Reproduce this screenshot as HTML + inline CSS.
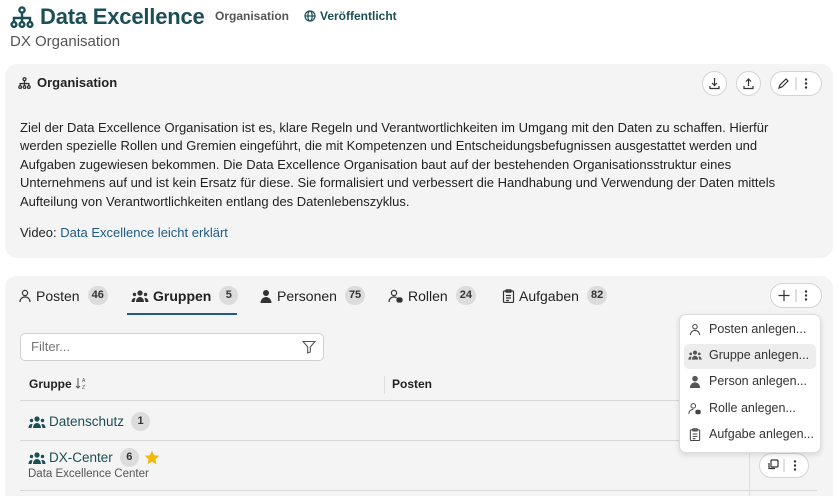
<!DOCTYPE html>
<html style="width:839px;height:496px;overflow:hidden"><head><meta charset="utf-8"><style>
*{box-sizing:border-box;margin:0;padding:0}
body{width:839px;height:496px;overflow:hidden;background:#fff;font-family:"Liberation Sans",sans-serif;color:#222;position:relative}
.a{position:absolute;white-space:nowrap}
.card{position:absolute;background:#f4f4f4;border-radius:12px}
.teal{color:#1b4f55}
.btn{position:absolute;width:25px;height:25px;border:1px solid #d4d4d4;border-radius:13px;background:#fff}
.pill{position:absolute;height:25px;border:1px solid #d4d4d4;border-radius:13px;background:#fff}
.badge{display:inline-block;background:#dcdcdc;border-radius:10px;font-size:11px;font-weight:bold;color:#333;padding:0 4px;height:19px;line-height:19px;vertical-align:middle;min-width:19px;text-align:center;margin-left:4px}
.tab{position:absolute;top:286px;font-size:14px;color:#222;display:flex;align-items:center;gap:4px}
.mi{position:absolute;left:688px;font-size:12.5px;color:#333;display:flex;align-items:center;gap:7px}
</style></head><body>
<div class="a teal" style="left:10px;top:4px;font-size:22px;font-weight:bold;display:flex;align-items:center;gap:6px">
<svg width="24" height="22" viewBox="0 0 24 22" fill="none" stroke="#1b4f55" stroke-width="2.4"><circle cx="12" cy="4" r="2.6"/><path d="M12 7v5M4 16v-4h16v4M12 12v4"/><circle cx="4" cy="18.5" r="2.4"/><circle cx="12" cy="18.5" r="2.4"/><circle cx="20" cy="18.5" r="2.4"/></svg>
<span style="letter-spacing:-0.2px">Data Excellence</span></div>
<div class="a" style="left:215px;top:9px;font-size:12px;font-weight:bold;color:#555">Organisation</div>
<div class="a teal" style="left:304px;top:9px;font-size:12px;font-weight:bold;display:flex;align-items:center;gap:4px"><svg width="12" height="12" viewBox="0 0 12 12" fill="none" stroke="#1b4f55" stroke-width="1.2"><circle cx="6" cy="6" r="5"/><ellipse cx="6" cy="6" rx="2.2" ry="5"/><path d="M1 6h10"/></svg>Veröffentlicht</div>
<div class="a" style="left:10px;top:33px;font-size:15px;color:#555">DX Organisation</div>

<div class="card" style="left:5px;top:64px;width:828px;height:194px"></div>
<div class="a" style="left:18px;top:75px;font-size:13px;font-weight:bold;display:flex;align-items:center;gap:6px"><svg width="13" height="12" viewBox="0 0 24 22" fill="none" stroke="#333" stroke-width="2.4"><circle cx="12" cy="4" r="2.6"/><path d="M12 7v5M4 16v-4h16v4M12 12v4"/><circle cx="4" cy="18.5" r="2.4"/><circle cx="12" cy="18.5" r="2.4"/><circle cx="20" cy="18.5" r="2.4"/></svg>Organisation</div>
<div class="btn" style="left:702px;top:71px"><svg width="23" height="23" viewBox="0 0 23 23" fill="none" stroke="#333" stroke-width="1.2"><path d="M11.5 6v7M9 11l2.5 2.5L14 11M7 14v2.5h9V14"/></svg></div>
<div class="btn" style="left:736px;top:71px"><svg width="23" height="23" viewBox="0 0 23 23" fill="none" stroke="#333" stroke-width="1.2"><path d="M11.5 14V7M9 9.5l2.5-2.5L14 9.5M7 14v2.5h9V14"/></svg></div>
<div class="pill" style="left:770px;top:71px;width:52px"><svg width="50" height="23" viewBox="0 0 50 23" fill="none" stroke="#333" stroke-width="1.2"><path d="M8 16l1-3 6-6 2 2-6 6z"/><path d="M25 5v13" stroke="#ccc"/><circle cx="35" cy="7.5" r=".6" fill="#333"/><circle cx="35" cy="11.5" r=".6" fill="#333"/><circle cx="35" cy="15.5" r=".6" fill="#333"/></svg></div>
<div class="a" style="left:20px;top:119px;font-size:13px;line-height:18.4px;color:#222">Ziel der Data Excellence Organisation ist es, klare Regeln und Verantwortlichkeiten im Umgang mit den Daten zu schaffen. Hierfür<br>werden spezielle Rollen und Gremien eingeführt, die mit Kompetenzen und Entscheidungsbefugnissen ausgestattet werden und<br>Aufgaben zugewiesen bekommen. Die Data Excellence Organisation baut auf der bestehenden Organisationsstruktur eines<br>Unternehmens auf und ist kein Ersatz für diese. Sie formalisiert und verbessert die Handhabung und Verwendung der Daten mittels<br>Aufteilung von Verantwortlichkeiten entlang des Datenlebenszyklus.</div>
<div class="a" style="left:20px;top:225px;font-size:13px">Video: <span style="color:#1f5b85">Data Excellence leicht erklärt</span></div>

<div class="card" style="left:5px;top:276px;width:828px;height:240px"></div>
<div class="tab" style="left:18px"><svg width="14" height="14" viewBox="0 0 14 14" fill="none" stroke="#333" stroke-width="1.2"><circle cx="7" cy="4" r="2.6"/><path d="M2 13c0-3 2-5 5-5s5 2 5 5"/></svg>Posten<span class="badge">46</span></div>
<div class="tab" style="left:131px;font-weight:bold"><svg width="18" height="14" viewBox="0 0 18 14" fill="#333"><circle cx="9" cy="4" r="2.6"/><circle cx="3.5" cy="5.5" r="1.7"/><circle cx="14.5" cy="5.5" r="1.7"/><path d="M5 13c0-3 2-5 4-5s4 2 4 5zM0.5 13c0-2 1-4 3-4h1l-1 4zM17.5 13c0-2-1-4-3-4h-1l1 4z"/></svg>Gruppen<span class="badge">5</span></div>
<div style="position:absolute;left:127px;top:313px;width:110px;height:2px;background:#1f5b85"></div>
<div class="tab" style="left:259px"><svg width="14" height="14" viewBox="0 0 14 14" fill="#333"><circle cx="7" cy="4" r="3"/><path d="M1.5 14c0-3.5 2.5-6 5.5-6s5.5 2.5 5.5 6z"/></svg>Personen<span class="badge">75</span></div>
<div class="tab" style="left:388px"><svg width="16" height="14" viewBox="0 0 16 14" fill="none" stroke="#333" stroke-width="1.2"><circle cx="6" cy="4" r="2.6"/><path d="M1 13c0-3 2-5 5-5 1 0 2 .3 2.6.8"/><rect x="9" y="9" width="5" height="4" rx="1.5" fill="#333"/></svg>Rollen<span class="badge">24</span></div>
<div class="tab" style="left:502px"><svg width="13" height="14" viewBox="0 0 13 14" fill="none" stroke="#333" stroke-width="1.2"><rect x="1.5" y="2" width="10" height="11.5" rx="1"/><rect x="4" y=".8" width="5" height="2.4" rx=".5"/><path d="M4 6.5h5M4 9h5M4 11.5h3"/></svg>Aufgaben<span class="badge">82</span></div>
<div class="pill" style="left:770px;top:283px;width:52px"><svg width="50" height="23" viewBox="0 0 50 23" fill="none" stroke="#333" stroke-width="1.2"><path d="M13 6v11M7.5 11.5h11"/><path d="M25 5v13" stroke="#ccc"/><circle cx="35" cy="7.5" r=".6" fill="#333"/><circle cx="35" cy="11.5" r=".6" fill="#333"/><circle cx="35" cy="15.5" r=".6" fill="#333"/></svg></div>

<div style="position:absolute;left:20px;top:333px;width:304px;height:28px;background:#fff;border:1px solid #d0d0d0;border-radius:5px"></div>
<div class="a" style="left:31px;top:339px;font-size:13px;color:#777">Filter...</div>
<svg class="a" style="left:302px;top:340px" width="14" height="14" viewBox="0 0 14 14" fill="none" stroke="#555" stroke-width="1.1"><path d="M1 1.5h12L8.3 7v5L5.7 13V7z"/></svg>
<div class="a" style="left:29px;top:377px;font-size:12px;font-weight:bold">Gruppe</div>
<svg class="a" style="left:75px;top:377px" width="12" height="13" viewBox="0 0 12 13" fill="none" stroke="#555" stroke-width="1"><path d="M3 1v10M1 9l2 2 2-2"/><text x="7" y="5" font-size="5" fill="#555" stroke="none" font-family="Liberation Sans">A</text><text x="7" y="12" font-size="5" fill="#555" stroke="none" font-family="Liberation Sans">Z</text></svg>
<div style="position:absolute;left:384px;top:376px;width:1px;height:18px;background:#ddd"></div>
<div class="a" style="left:392px;top:377px;font-size:12px;font-weight:bold">Posten</div>
<div style="position:absolute;left:20px;top:400px;width:797px;height:1px;background:#d8d8d8"></div>
<div class="a teal" style="left:28px;top:412px;font-size:13.5px;display:flex;align-items:center;gap:3px"><svg width="18" height="14" viewBox="0 0 18 14" fill="#1b4f55"><circle cx="9" cy="4" r="2.6"/><circle cx="3.5" cy="5.5" r="1.7"/><circle cx="14.5" cy="5.5" r="1.7"/><path d="M5 13c0-3 2-5 4-5s4 2 4 5zM0.5 13c0-2 1-4 3-4h1l-1 4zM17.5 13c0-2-1-4-3-4h-1l1 4z"/></svg>Datenschutz<span class="badge" style="color:#333">1</span></div>
<div style="position:absolute;left:20px;top:440px;width:797px;height:1px;background:#d8d8d8"></div>
<div class="a teal" style="left:28px;top:448px;font-size:13.5px;display:flex;align-items:center;gap:3px"><svg width="18" height="14" viewBox="0 0 18 14" fill="#1b4f55"><circle cx="9" cy="4" r="2.6"/><circle cx="3.5" cy="5.5" r="1.7"/><circle cx="14.5" cy="5.5" r="1.7"/><path d="M5 13c0-3 2-5 4-5s4 2 4 5zM0.5 13c0-2 1-4 3-4h1l-1 4zM17.5 13c0-2-1-4-3-4h-1l1 4z"/></svg>DX-Center<span class="badge" style="color:#333">6</span><svg width="16" height="15" viewBox="0 0 24 23" style="margin-left:2px"><path d="M12 1l3.3 7 7.6.9-5.6 5.2 1.5 7.6L12 17.9 5.2 21.7l1.5-7.6L1.1 8.9 8.7 8z" fill="#f2b807"/></svg></div>
<div class="a" style="left:28px;top:468px;font-size:11.5px;color:#555">Data Excellence Center</div>
<div style="position:absolute;left:20px;top:490px;width:797px;height:1px;background:#d8d8d8"></div>
<div style="position:absolute;left:749px;top:440px;width:1px;height:56px;background:#ddd"></div>
<div class="pill" style="left:759px;top:453px;width:50px"><svg width="48" height="23" viewBox="0 0 48 23" fill="none" stroke="#333" stroke-width="1.2"><rect x="11" y="6" width="7" height="7" rx="1"/><path d="M9 9v5.5h6"/><path d="M24 5v13" stroke="#ccc"/><circle cx="35" cy="7.5" r=".6" fill="#333"/><circle cx="35" cy="11.5" r=".6" fill="#333"/><circle cx="35" cy="15.5" r=".6" fill="#333"/></svg></div>

<div style="position:absolute;left:679px;top:314px;width:142px;height:139px;background:#fff;border:1px solid #ddd;border-radius:7px;box-shadow:0 2px 6px rgba(0,0,0,.12)"></div>
<div style="position:absolute;left:684px;top:344px;width:132px;height:25px;background:#ededed;border-radius:5px"></div>
<div class="mi" style="top:322px"><svg width="14" height="13" viewBox="0 0 14 14" fill="none" stroke="#444" stroke-width="1.1"><circle cx="7" cy="4" r="2.4"/><path d="M2 13c0-3 2-5 5-5s5 2 5 5"/></svg>Posten anlegen...</div>
<div class="mi" style="top:348px"><svg width="14" height="12" viewBox="0 0 18 14" fill="#555"><circle cx="9" cy="4" r="2.6"/><circle cx="3.5" cy="5.5" r="1.7"/><circle cx="14.5" cy="5.5" r="1.7"/><path d="M5 13c0-3 2-5 4-5s4 2 4 5zM0.5 13c0-2 1-4 3-4h1l-1 4zM17.5 13c0-2-1-4-3-4h-1l1 4z"/></svg>Gruppe anlegen...</div>
<div class="mi" style="top:374px"><svg width="14" height="13" viewBox="0 0 14 14" fill="#555"><circle cx="7" cy="4" r="3"/><path d="M1.5 14c0-3.5 2.5-6 5.5-6s5.5 2.5 5.5 6z"/></svg>Person anlegen...</div>
<div class="mi" style="top:401px"><svg width="14" height="13" viewBox="0 0 16 14" fill="none" stroke="#444" stroke-width="1.1"><circle cx="6" cy="4" r="2.6"/><path d="M1 13c0-3 2-5 5-5"/><rect x="9" y="9" width="5" height="4" rx="1.5" fill="#444"/></svg>Rolle anlegen...</div>
<div class="mi" style="top:427px"><svg width="14" height="13" viewBox="0 0 13 14" fill="none" stroke="#444" stroke-width="1.1"><rect x="1.5" y="2" width="10" height="11.5" rx="1"/><rect x="4" y=".8" width="5" height="2.4" rx=".5"/><path d="M4 6.5h5M4 9h5M4 11.5h3"/></svg>Aufgabe anlegen...</div>
</body></html>
